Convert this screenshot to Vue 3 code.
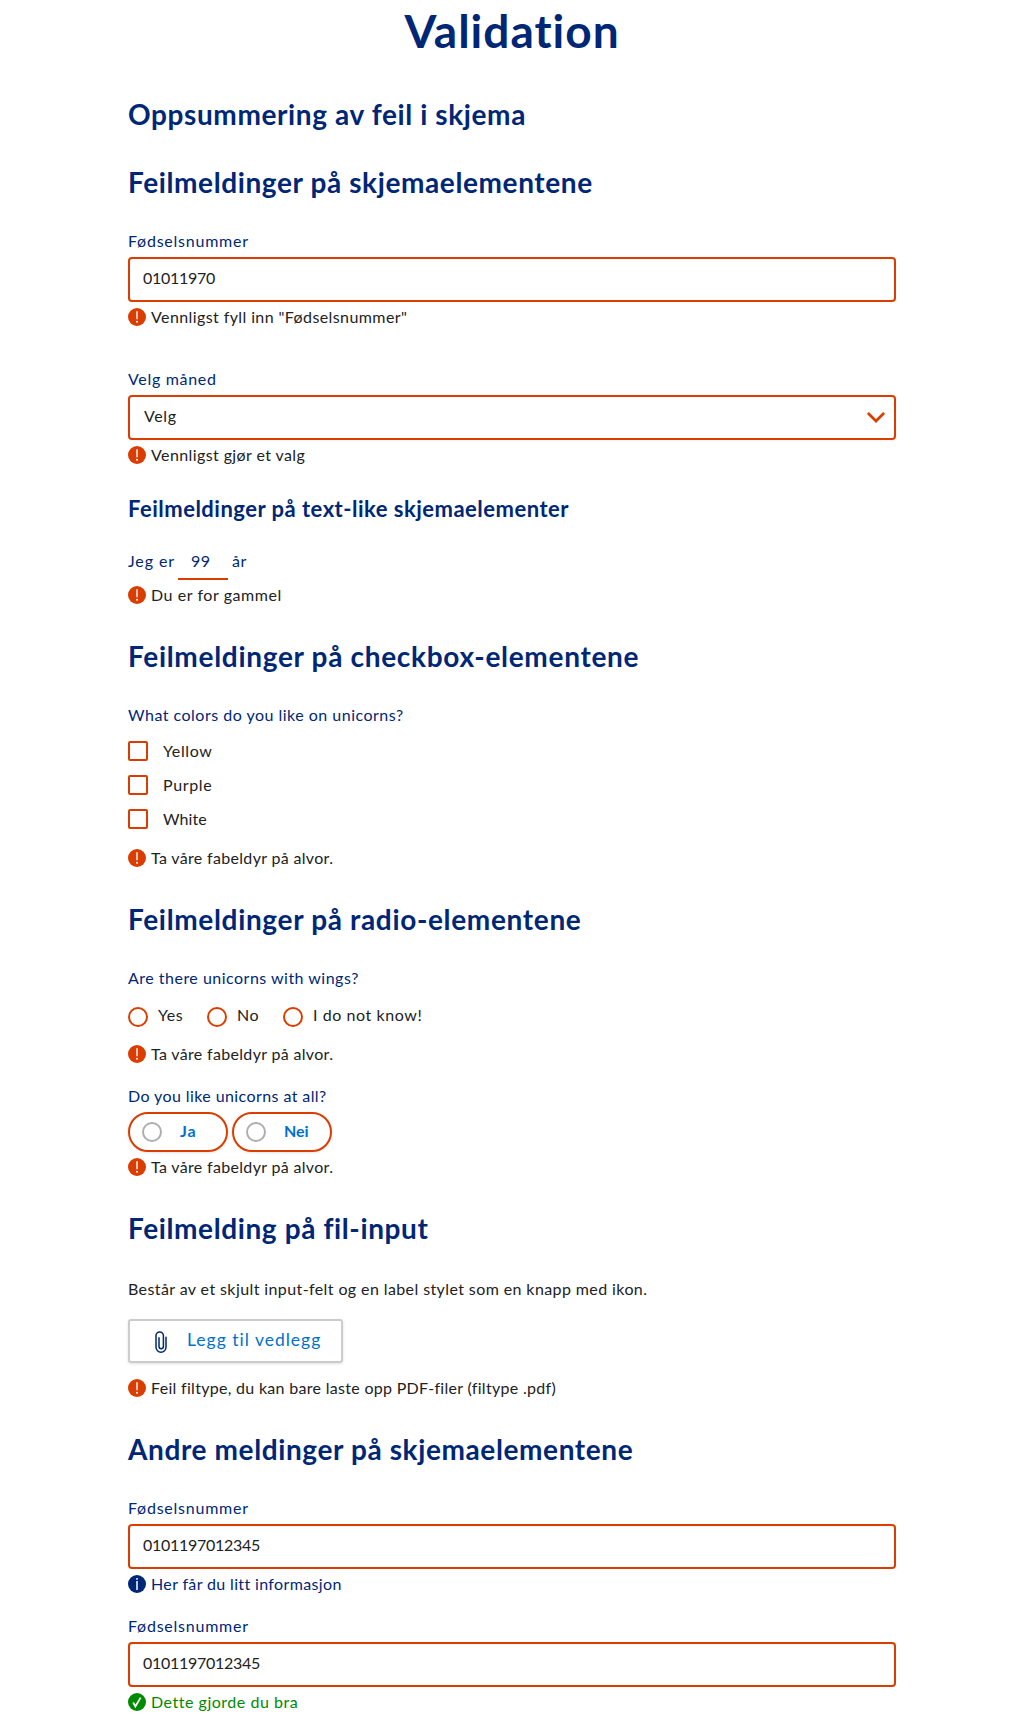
<script setup>
import { h } from 'vue'

const glyphs = {
  error: [h('path', { d: 'M9 3.2v8', stroke: '#fff', 'stroke-width': 1.4, fill: 'none' }), h('circle', { cx: 9, cy: 13.7, r: 1, fill: '#fff' })],
  info: [h('path', { d: 'M9 6v9', stroke: '#fff', 'stroke-width': 1.5, fill: 'none' }), h('circle', { cx: 9, cy: 3.9, r: 0.95, fill: '#fff' })],
  success: [h('path', { d: 'M5.2 9.5l2.2 3.9 5.2-8.8', stroke: '#fff', 'stroke-width': 1.8, fill: 'none' })],
}

const Message = (props) =>
  h('div', { class: ['message', props.type], style: { letterSpacing: props.ls + 'px' } }, [
    h('svg', { class: 'message-icon', width: 18, height: 18, viewBox: '0 0 18 18' }, [
      h('circle', { cx: 9, cy: 9, r: 9, fill: 'currentColor' }),
      ...glyphs[props.type],
    ]),
    h('span', { class: 'message-text' }, props.text),
  ])
Message.props = ['type', 'text', 'ls']

const colors = [
  { text: 'Yellow', ls: 0.6 },
  { text: 'Purple', ls: 0.65 },
  { text: 'White', ls: 0.1 },
]
</script>

<template>
  <main class="page">
    <h1>Validation</h1>

    <h2 class="first">Oppsummering av feil i skjema</h2>

    <h2>Feilmeldinger på skjemaelementene</h2>
    <section class="form-group">
      <label class="label">Fødselsnummer</label>
      <div class="field">01011970</div>
      <Message type="error" text='Vennligst fyll inn "Fødselsnummer"' :ls="0.4" />
    </section>
    <section class="form-group month">
      <label class="label t7">Velg måned</label>
      <div class="field select">
        <span>Velg</span>
        <svg width="18" height="12" viewBox="0 0 18 12"><path d="M1.7 1.7L9 9l7.3-7.3" fill="none" stroke="#da3d00" stroke-width="2.7" stroke-linecap="round" /></svg>
      </div>
      <Message type="error" text="Vennligst gjør et valg" :ls="0.4" />
    </section>

    <h3>Feilmeldinger på text-like skjemaelementer</h3>
    <div class="sentence"><span class="t9">Jeg er</span><span class="inline-input">99</span><span>år</span></div>
    <Message type="error" text="Du er for gammel" :ls="0.56" />

    <h2 class="t69">Feilmeldinger på checkbox-elementene</h2>
    <section class="form-group">
      <label class="label t5">What colors do you like on unicorns?</label>
      <div class="checks">
        <div v-for="c in colors" :key="c.text" class="check" :style="{ letterSpacing: c.ls + 'px' }"><i class="box"></i>{{ c.text }}</div>
      </div>
      <Message type="error" text="Ta våre fabeldyr på alvor." :ls="0.33" />
    </section>

    <h2 class="t66">Feilmeldinger på radio-elementene</h2>
    <section class="form-group">
      <label class="label t5">Are there unicorns with wings?</label>
      <div class="radios">
        <div class="radio yes"><i class="circle"></i><span>Yes</span></div>
        <div class="radio no"><i class="circle"></i><span>No</span></div>
        <div class="radio"><i class="circle"></i><span>I do not know!</span></div>
      </div>
      <Message type="error" text="Ta våre fabeldyr på alvor." :ls="0.33" />
    </section>
    <section class="form-group next">
      <label class="label t4">Do you like unicorns at all?</label>
      <div class="pills">
        <div class="pill ja"><i class="circle"></i>Ja</div>
        <div class="pill nei"><i class="circle"></i>Nei</div>
      </div>
      <Message type="error" text="Ta våre fabeldyr på alvor." :ls="0.33" />
    </section>

    <h2>Feilmelding på fil-input</h2>
    <p>Består av et skjult input-felt og en label stylet som en knapp med ikon.</p>
    <div class="upload">
      <svg width="12" height="22" viewBox="0 0 12 22"><path d="M11 6.2v10a5 5 0 0 1-10 0V4.6a3.7 3.7 0 0 1 7.4 0v10.9a2.2 2.2 0 0 1-4.4 0V6.8" fill="none" stroke="#002776" stroke-width="1.5" stroke-linecap="round" /></svg>
      <span>Legg til vedlegg</span>
    </div>
    <Message type="error" text="Feil filtype, du kan bare laste opp PDF-filer (filtype .pdf)" :ls="0.3" />

    <h2>Andre meldinger på skjemaelementene</h2>
    <section class="form-group">
      <label class="label">Fødselsnummer</label>
      <div class="field">0101197012345</div>
      <Message type="info" text="Her får du litt informasjon" :ls="0.36" />
    </section>
    <section class="form-group next">
      <label class="label">Fødselsnummer</label>
      <div class="field">0101197012345</div>
      <Message type="success" text="Dette gjorde du bra" :ls="0.52" />
    </section>
  </main>
</template>

<style>
body { background: #fff; }
</style>

<style scoped>
.page {
  box-sizing: border-box;
  width: 768px;
  margin-left: 128px;
  padding: 3px 0 5px;
  font: 400 16px/24px Lato, sans-serif;
  color: #222;
}
h1, h2, h3, p { margin: 0; }
h1, h2, h3 { color: #002776; font-weight: 700; white-space: nowrap; }
h1 { margin-bottom: -2px; font-size: 46px; line-height: 56px; letter-spacing: 1px; text-align: center; }
h2 { margin-top: 35px; margin-bottom: -1px; font-size: 28px; line-height: 34px; letter-spacing: .61px; }
h2.first { margin-top: 40px; }
h3 { margin-top: 31px; font-size: 22px; line-height: 28px; letter-spacing: .49px; }
.t66 { letter-spacing: .66px; }
.t69 { letter-spacing: .69px; }
.form-group { margin-top: 31px; }
.form-group.month { margin-top: 41px; }
.form-group.next { margin-top: 21px; }
.label { display: block; margin-bottom: 4px; color: #002776; letter-spacing: .76px; }
.label.t7 { letter-spacing: .68px; }
.label.t5 { letter-spacing: .49px; }
.label.t4 { letter-spacing: .41px; }
.field {
  box-sizing: border-box;
  height: 45px;
  padding: 7px 13px;
  border: 2px solid #da3d00;
  border-radius: 4px;
  box-shadow: inset 0 1px 3px rgba(0, 0, 0, .04);
  letter-spacing: -.27px;
}
.select {
  display: flex;
  justify-content: space-between;
  padding: 7px 9px 7px 14px;
  letter-spacing: .6px;
  box-shadow: 0 1px 3px rgba(0, 0, 0, .06);
}
.select svg { margin-top: 8px; }
.message { display: flex; height: 18px; margin-top: 6px; line-height: 18px; white-space: nowrap; }
:deep(.message-icon) { flex: none; margin-right: 5px; }
.message.error :deep(.message-icon) { color: #da3d00; }
.message.info { color: #002776; }
.message.success { color: #008a00; }
.sentence { display: flex; height: 31px; margin-top: 26px; color: #002776; letter-spacing: .5px; }
.t9 { width: 50px; letter-spacing: .9px; }
.inline-input {
  box-sizing: border-box;
  width: 50px;
  margin-right: 4px;
  padding-left: 13px;
  border-bottom: 2px solid #da3d00;
}
.checks { display: flex; flex-direction: column; gap: 14px; margin: 14px 0 20px; }
.check { display: flex; height: 20px; line-height: 20px; }
.box { box-sizing: border-box; width: 20px; height: 20px; margin-right: 15px; border: 2px solid #da3d00; border-radius: 2px; }
.radios { display: flex; margin: 17px 0 18px; }
.radio { display: flex; height: 20px; line-height: 16px; letter-spacing: .57px; }
.yes { width: 79px; }
.no { width: 76px; }
.circle { box-sizing: border-box; flex: none; width: 20px; height: 20px; border: 2px solid #da3d00; border-radius: 50%; }
.radio .circle { margin-right: 10px; }
.pills { display: flex; gap: 4px; }
.pill {
  display: flex;
  box-sizing: border-box;
  width: 100px;
  height: 40px;
  padding: 8px 12px;
  border: 2px solid #da3d00;
  border-radius: 20px;
  box-shadow: 0 1px 3px rgba(0, 0, 0, .1);
  color: #0071cd;
  font-weight: 700;
  line-height: 17px;
  letter-spacing: 0;
}
.pill .circle { margin-right: 18px; border-color: #aeaeae; }
.pill.ja { letter-spacing: 1px; }
p { margin-top: 33px; letter-spacing: .4px; }
.upload {
  display: flex;
  box-sizing: border-box;
  width: 215px;
  height: 44px;
  margin: 18px 0 16px;
  padding: 10px 0 0 25px;
  border: 2px solid #ccc;
  border-radius: 3px;
  box-shadow: 0 1px 3px rgba(0, 0, 0, .12);
  color: #0071cd;
  font-size: 17.5px;
  letter-spacing: 1px;
}
.upload span { margin-left: 20px; line-height: 18px; }
</style>
